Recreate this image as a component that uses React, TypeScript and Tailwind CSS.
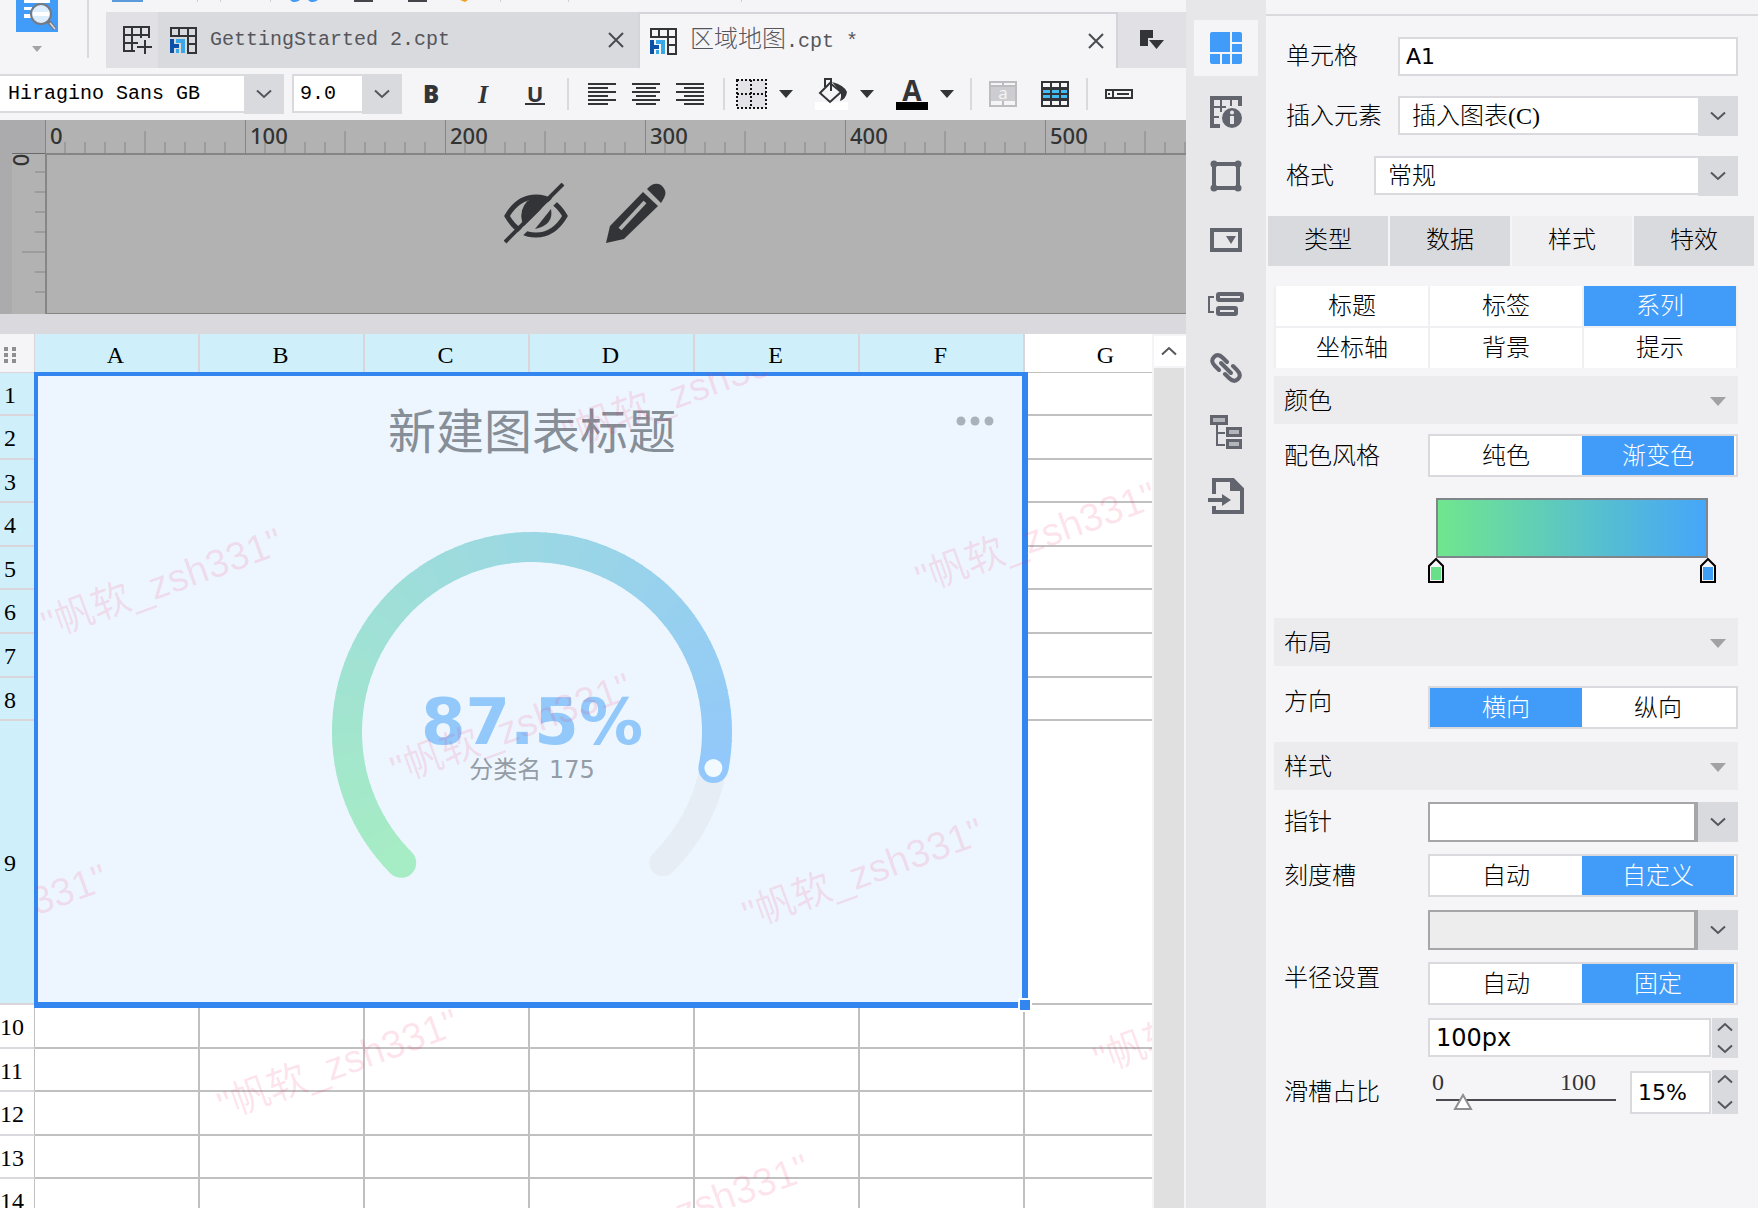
import React from "react";
import clsx from "clsx";

const SONG = "font-['Liberation_Serif','Noto_Sans_CJK_SC',serif]";
const MONO = "font-['Liberation_Mono','Noto_Sans_CJK_SC',monospace]";
const SANS = "font-['DejaVu_Sans','Noto_Sans_CJK_SC',sans-serif]";

/* ---------- small shared pieces ---------- */

const ChevronDown = () => (
  <svg width="16" height="10" viewBox="0 0 16 10" fill="none" stroke="#55565c" strokeWidth="2">
    <path d="M1 1.5l7 6.5 7-6.5" />
  </svg>
);

const ChevronUp = () => (
  <svg width="16" height="10" viewBox="0 0 16 10" fill="none" stroke="#55565c" strokeWidth="2">
    <path d="M1 8.5L8 2l7 6.5" />
  </svg>
);

const Caret = () => (
  <svg width="14" height="8" viewBox="0 0 14 8" fill="#333438">
    <path d="M0 0h14L7 8z" />
  </svg>
);

const Divider = () => <div className="w-[2px] h-8 bg-[#dadade] shrink-0" />;

const Select = ({ id, label, value, className, textClass }) => (
  <div className={clsx("relative flex h-10", className)}>
    <select
      id={id}
      aria-label={label}
      defaultValue={value}
      className={clsx(
        "appearance-none w-full h-[39px] bg-white border-2 border-[#dadade] text-black outline-none",
        textClass
      )}
    >
      <option>{value}</option>
    </select>
    <span className="absolute right-0 top-0 w-10 h-10 bg-[#d9dade] flex items-center justify-center pointer-events-none">
      <ChevronDown />
    </span>
  </div>
);

/* ---------- file tabs ---------- */

const FileIcon = () => (
  <svg width="27" height="27" viewBox="0 0 27 27" className="shrink-0">
    <g fill="none" stroke="#333438" strokeWidth="2">
      <path d="M1 10V1h25v25h-8V10" />
      <path d="M0 9h26M9 1v8M18 1v8M18 17h8" />
    </g>
    <path d="M0 12h4v5h5v4H4v5H0z" fill="#0b52a8" />
    <path d="M6 12h9v14h-4V16H6zM6 22h3v4H6z" fill="#3aa8e6" />
  </svg>
);

const CloseIcon = () => (
  <svg width="16" height="16" viewBox="0 0 16 16" stroke="#4a4b50" strokeWidth="2">
    <path d="M1 1l14 14M15 1L1 15" />
  </svg>
);

const TopBar = () => (
  <div className="flex h-[68px] shrink-0">
    <div className="flex w-[106px] shrink-0">
      <button aria-label="预览" className="flex flex-col items-center w-[74px] h-[68px]">
        <svg width="42" height="34" viewBox="0 0 42 34">
          <path d="M0 0h42v32H0z" fill="#409bf9" />
          <path d="M8 0h26v3H8zM8 7h8v3H8zM8 14h8v4H8z" fill="#fff" />
          <circle cx="25" cy="14" r="10" fill="#dcedfd" stroke="#777a80" strokeWidth="2" />
          <path d="M17 12h16v4H17z" fill="#fff" />
          <path d="M32 21l7 8" stroke="#77797e" strokeWidth="4" />
          <path d="M34 23l5 6" stroke="#d9dade" strokeWidth="1.5" />
        </svg>
        <svg width="10" height="6" viewBox="0 0 10 6" fill="#a4a4a8" className="mt-3">
          <path d="M0 0h10L5 6z" />
        </svg>
      </button>
      <div className="ml-[13px] w-[2px] h-[58px] bg-[#dadade]" />
    </div>

    <div className="flex-1 min-w-0">
      {/* bottom edge of the main toolbar icons */}
      <svg width="700" height="12" viewBox="0 0 700 12">
        <path d="M6 0h31v2H6z" fill="#5b9bdc" />
        <path d="M91 0h1v2h-1zM114 0h1v2h-1zM164 0h1v2h-1zM394 0h1v2h-1zM462 0h1v2h-1zM635 0h1v2h-1z" fill="#cfcfd4" />
        <path d="M184 0h10q-4 3-8 1.500zM202 0h10q-4 3-8 1.500z" fill="#409bf9" />
        <path d="M248 0h19v2h-19zM302 0h19v2h-19z" fill="#44454a" />
        <path d="M354 0h8l-3 2z" fill="#f0a21e" />
      </svg>
      <div className="flex h-14 bg-[#e0e0e5]">
        <button aria-label="新建" className="w-[52px] shrink-0 flex items-center justify-center pl-3">
          <svg width="30" height="28" viewBox="0 0 30 28" fill="none" stroke="#333438" strokeWidth="2">
            <path d="M12 25H1V1h25v11M1 9h25M1 17h14M9 1v24M18 1v11M22 14v14M14 21h15" />
          </svg>
        </button>
        <div className="flex-1 max-w-[480px] bg-[#d9dade] flex items-center pl-3 pr-[14px]">
          <FileIcon />
          <span className={clsx(MONO, "ml-[13px] flex-1 text-xl text-[#55565c]")}>GettingStarted 2.cpt</span>
          <button aria-label="关闭">
            <CloseIcon />
          </button>
        </div>
        <div className="flex-1 max-w-[480px] bg-[#f5f5f8] border-t-2 border-x-2 border-[#d4d4da] flex items-center pl-[10px] pr-3">
          <FileIcon />
          <span className={clsx(MONO, "ml-[13px] flex-1 flex items-baseline text-xl text-[#55565c]")}>
            <span className="text-2xl font-light">区域地图</span>
            <span className="whitespace-pre">.cpt *</span>
          </span>
          <button aria-label="关闭">
            <CloseIcon />
          </button>
        </div>
        <button aria-label="标签列表" className="w-[68px] shrink-0 flex items-center justify-center">
          <svg width="24" height="20" viewBox="0 0 24 20" fill="#333438">
            <path d="M0 0h13v8H8v8H0zM9 10h15l-7.500 9z" />
          </svg>
        </button>
      </div>
    </div>
  </div>
);

/* ---------- format toolbar ---------- */

const AlignIcon = ({ paths }) => (
  <svg width="28" height="22" viewBox="0 0 28 22" stroke="#333438" strokeWidth="2">
    <path d={paths} />
  </svg>
);

const FormatBar = () => (
  <div className="flex items-center h-[52px] shrink-0 overflow-hidden">
    <Select
      id="font"
      label="字体"
      value="Hiragino Sans GB"
      className="w-[284px] shrink-0"
      textClass={clsx(MONO, "pl-2 text-xl border-l-0")}
    />
    <Select
      id="size"
      label="字号"
      value="9.0"
      className="w-[110px] shrink-0 ml-2"
      textClass={clsx(MONO, "pl-[6px] text-xl")}
    />
    <div className="flex items-center ml-[19px] gap-8 w-[128px] shrink-0 text-[#333438] font-['Open_Sans',sans-serif]">
      <button className="w-5 text-2xl font-extrabold">B</button>
      <button className="w-5 text-[26px] font-bold italic font-['Liberation_Serif',serif]">I</button>
      <button className="w-5 text-[22px] font-bold leading-5 border-b-2 border-[#333438]">U</button>
    </div>
    <div className="ml-[18px]">
      <Divider />
    </div>
    <div className="flex items-center gap-4 ml-[19px]">
      <button aria-label="左对齐">
        <AlignIcon paths="M0 1h28M0 5h20M0 9h28M0 13h20M0 17h28M0 21h20" />
      </button>
      <button aria-label="居中">
        <AlignIcon paths="M0 1h28M4 5h20M0 9h28M4 13h20M0 17h28M4 21h20" />
      </button>
      <button aria-label="右对齐">
        <AlignIcon paths="M0 1h28M8 5h20M0 9h28M8 13h20M0 17h28M8 21h20" />
      </button>
    </div>
    <div className="ml-[19px]">
      <Divider />
    </div>
    <button aria-label="边框" className="flex items-center gap-3 ml-[11px]">
      <svg width="31" height="30" viewBox="0 0 31 30" fill="#e3e3e8" stroke="#111" strokeWidth="2" strokeDasharray="2 2">
        <path d="M1 1h29v28H1zM15 1v28M1 15h29" />
      </svg>
      <Caret />
    </button>
    <button aria-label="填充色" className="flex items-center gap-3 ml-[22px]">
      <svg width="33" height="32" viewBox="0 0 33 32">
        <path d="M0 24h33v8H0z" fill="#fff" />
        <path d="M10 9V1h6v12M15 5L5 15l10 9 11-10z" fill="none" stroke="#333438" strokeWidth="2" />
        <path d="M17 4q12 3 15 10-1 7-7 9 3-8-2-12z" fill="#333438" />
      </svg>
      <Caret />
    </button>
    <button aria-label="字体颜色" className="flex items-center gap-3 ml-[22px]">
      <span className="flex flex-col items-center w-8 h-8 bg-[linear-gradient(#000,#000)] bg-no-repeat bg-bottom bg-[length:32px_8px]">
        <span className="text-[28px] leading-6 font-bold text-[#333438] font-['Open_Sans',sans-serif]">A</span>
      </span>
      <Caret />
    </button>
    <div className="ml-4">
      <Divider />
    </div>
    <button aria-label="合并单元格" className="ml-[17px]">
      <svg width="28" height="26" viewBox="0 0 28 26">
        <path d="M0 0h28v26H0z" fill="#bdbdc1" />
        <path d="M2 2h11v2H2zM15 2h11v2H15zM2 20h11v4H2zM15 20h11v4H15z" fill="#f5f5f8" />
        <path d="M2 6h24v14H2z" fill="#cdcdd1" />
        <text x="14" y="18" textAnchor="middle" fontSize="17" fontFamily="Open Sans" fill="#f5f5f8">a</text>
      </svg>
    </button>
    <button aria-label="条件属性" className="ml-6">
      <svg width="28" height="26" viewBox="0 0 28 26" fill="none" stroke="#333438" strokeWidth="2">
        <path d="M1 8h26v10H1z" fill="#41bdf3" />
        <path d="M1 1h26v24H1zM1 7h26M1 13h26M1 19h26M10 1v24M19 1v24" />
      </svg>
    </button>
    <div className="ml-[17px]">
      <Divider />
    </div>
    <button aria-label="控件" className="ml-[17px]">
      <svg width="28" height="10" viewBox="0 0 28 10" fill="none" stroke="#333438" strokeWidth="2">
        <path d="M1 1h26v8H1zM8 1v8M12 5h12M4 4v2" />
      </svg>
    </button>
  </div>
);

/* ---------- ruler and report block ---------- */

const RulerSegment = ({ label }) => (
  <div className="relative w-[200px] h-[33px] shrink-0 border-l border-[#868686]">
    <svg width="199" height="33" viewBox="0 0 199 33" stroke="#9c9c9c" strokeWidth="2" className="absolute inset-0">
      {[1, 2, 3, 4, 5, 6, 7, 8, 9].map((i) => (
        <path key={i} d={i === 5 ? "M99 11v22" : `M${i * 20 - 1} 22v11`} />
      ))}
    </svg>
    <span className="relative block pl-1 text-[22px] leading-[30px] font-medium text-[#333] font-['Noto_Sans',sans-serif]">
      {label}
    </span>
  </div>
);

const ReportBlock = () => (
  <div className="shrink-0 bg-[#b2b2b2]">
    <div className="flex h-[33px] overflow-hidden">
      <div className="w-[45px] shrink-0 bg-[#ababad]" />
      {[0, 100, 200, 300, 400, 500].map((n) => (
        <RulerSegment key={n} label={n} />
      ))}
    </div>
    <div className="flex h-[161px]">
      <div className="w-3 shrink-0 bg-[#ababad]" />
      <div className="w-[33px] shrink-0 border-t border-[#6a6a6a] grid">
        <svg width="33" height="158" viewBox="0 0 33 158" stroke="#9c9c9c" strokeWidth="2" className="[grid-area:1/1]">
          <path d="M23 18h10M23 38h10M23 58h10M23 78h10M10 98h23M23 118h10M23 138h10" />
        </svg>
        <span className="[grid-area:1/1] flex items-center justify-center w-4 h-3 text-[22px] leading-3 font-medium text-[#333] -rotate-90 font-['Noto_Sans',sans-serif]">
          0
        </span>
      </div>
      <div className="flex-1 border-2 border-r-0 border-b border-[#868686] flex items-start pt-7 pl-[457px] gap-[38px]">
        <button aria-label="隐藏">
          <svg width="64" height="62" viewBox="0 0 64 62">
            <path d="M3 33Q14 14 32 14t29 19Q50 52 32 52T3 33z" fill="none" stroke="#333438" strokeWidth="5" />
            <path d="M32 14a17 19 0 0 0-9 33l20-30a16 16 0 0 0-11-3z" fill="#333438" />
            <path d="M47 26q3 16-16 20z" fill="#333438" />
            <path d="M5 62L64 4" stroke="#b2b2b2" strokeWidth="6" />
            <path d="M1 59L59 1" stroke="#333438" strokeWidth="4" />
          </svg>
        </button>
        <button aria-label="编辑">
          <svg width="60" height="62" viewBox="0 0 60 62" fill="#333438">
            <path d="M0 60l4-17L37 9l15 14-34 33z" />
            <path d="M41 6q7-8 14-4 7 6 3 13l-3 5z" />
            <path d="M14 46l25-27" stroke="#b2b2b2" strokeWidth="4" />
          </svg>
        </button>
      </div>
    </div>
  </div>
);

/* ---------- gauge chart ---------- */

const START = 135;
const SWEEP = 236.25;
const FROM = [166, 236, 196];
const TO = [146, 200, 251];

const point = (deg) => {
  const a = (deg * Math.PI) / 180;
  return `${(200 + 185 * Math.cos(a)).toFixed(2)} ${(200 + 185 * Math.sin(a)).toFixed(2)}`;
};

const mix = (t) => `rgb(${FROM.map((c, i) => Math.round(c + (TO[i] - c) * t)).join(",")})`;

const Gauge = () => {
  const steps = 80;
  const segments = Array.from({ length: steps }, (_, i) => {
    const a = START + (SWEEP * i) / steps;
    const b = START + (SWEEP * (i + 1)) / steps + (i < steps - 1 ? 0.5 : 0);
    return <path key={i} d={`M${point(a)}A185 185 0 0 1 ${point(b)}`} stroke={mix(i / steps)} />;
  });
  return (
    <svg width="400" height="346" viewBox="0 0 400 346" fill="none">
      <path d={`M${point(11)}A185 185 0 0 1 ${point(45)}`} stroke="#e6edf4" strokeWidth="27" strokeLinecap="round" />
      <circle cx="69.200" cy="330.800" r="15" fill={mix(0)} />
      <g strokeWidth="30">{segments}</g>
      <circle cx="381.400" cy="236.100" r="15" fill={mix(1)} />
      <circle cx="381.400" cy="236.100" r="9" fill="#f2f9ff" />
    </svg>
  );
};

const Chart = () => (
  <div className="relative flex flex-col items-center h-[626px] pl-1 bg-[#edf6fe]">
    <h2 className="mt-[22px] text-5xl leading-[60px] text-[#868e97] font-['Noto_Sans_CJK_SC',sans-serif]">新建图表标题</h2>
    <button aria-label="更多" className="absolute right-7 top-10">
      <svg width="38" height="10" viewBox="0 0 38 10" fill="#a9b1b9">
        <circle cx="5" cy="5" r="4.500" />
        <circle cx="19" cy="5" r="4.500" />
        <circle cx="33" cy="5" r="4.500" />
      </svg>
    </button>
    <div className="grid justify-items-center mt-[74px]">
      <div className="[grid-area:1/1]">
        <Gauge />
      </div>
      <div className={clsx(SANS, "[grid-area:1/1] pt-[158px] text-center")}>
        <div className="text-[64px] leading-[64px] font-bold text-[#92c8fa]">87.5%</div>
        <div className="text-2xl leading-8 text-[#949ca5]">分类名 175</div>
      </div>
    </div>
  </div>
);

/* ---------- spreadsheet ---------- */

const COLUMNS = ["A", "B", "C", "D", "E", "F", "G"];
const ROWS = [43, 44, 43, 44, 43, 44, 44, 43, 284, 44, 43, 44, 43, 44];

const WATERMARKS = [
  [648, 19],
  [1001, 164],
  [127, 210],
  [476, 355],
  [828, 500],
  [-48, 546],
  [303, 691],
  [1179, 645],
  [654, 836],
];

const Sheet = () => (
  <div className="relative flex-1 overflow-hidden bg-white">
    <table className={clsx(SONG, "table-fixed w-[1190px] border-separate border-spacing-0 text-2xl text-black")}>
      <colgroup>
        <col className="w-[35px]" />
        {COLUMNS.map((c) => (
          <col key={c} className="w-[165px]" />
        ))}
      </colgroup>
      <thead>
        <tr className="h-[39px]">
          <th className="p-0 pl-1 pt-1 bg-[#f5f5f8] border-r border-b border-[#d9d5da]">
            <svg width="13" height="16" viewBox="0 0 13 16" fill="#8e8e93">
              <path d="M0 0h4v4H0zM8 0h4v4H8zM0 6h4v4H0zM8 6h4v4H8zM0 12h4v4H0zM8 12h4v4H8z" />
            </svg>
          </th>
          {COLUMNS.map((c) => (
            <th
              key={c}
              className={clsx(
                "p-0 pt-1 pr-[2px] font-normal leading-8 border-r-2 border-b",
                c === "G" ? "bg-white border-[#c0c0c0]" : "bg-[#cfeffa] border-[#d9d5da]"
              )}
            >
              {c}
            </th>
          ))}
        </tr>
      </thead>
      <tbody>
        {ROWS.map((h, i) => (
          <tr key={i} style={{ height: h }}>
            <th
              className={clsx(
                "p-0 pt-[2px] pr-[14px] font-normal leading-8 border-b-2 border-r",
                i < 9 ? "bg-[#cfeffa] border-b-[#d9d5da] border-r-[#c0c0c0]" : "bg-white border-b-[#dadade] border-r-[#c0c0c0]"
              )}
            >
              {i + 1}
            </th>
            {i === 0 && (
              <td rowSpan={9} colSpan={6} className="relative p-0">
                <div className="absolute -left-px -top-px -right-[3px] -bottom-[3px] z-10 border-4 border-r-[6px] border-b-[6px] border-[#3385f0] bg-[#edf6fe]">
                  <Chart />
                  {/* drag handle */}
                  <span className="absolute -right-[10px] -bottom-[10px] w-[14px] h-[14px] box-border border-2 border-white bg-[#3385f0]" />
                </div>
              </td>
            )}
            {(i < 9 ? ["G"] : COLUMNS).map((c) => (
              <td key={c} className="p-0 border-r-2 border-b-2 border-[#c0c0c0]" />
            ))}
          </tr>
        ))}
      </tbody>
    </table>

    {/* user watermark, repeated over the cells */}
    <div className="absolute left-[35px] top-[39px] right-0 bottom-0 z-20 overflow-hidden pointer-events-none">
      {WATERMARKS.map(([x, y], i) => (
        <span
          key={i}
          style={{ left: x, top: y }}
          className="absolute -translate-x-1/2 -translate-y-1/2 -rotate-20 whitespace-nowrap text-[39px] leading-none text-[#f5286e]/13 font-['Liberation_Sans','Noto_Sans_CJK_SC',sans-serif]"
        >
          "帆软_zsh331"
        </span>
      ))}
    </div>
  </div>
);

/* ---------- side icon rail ---------- */

const RAIL = [
  {
    name: "单元格元素",
    icon: (
      <svg width="32" height="32" viewBox="0 0 32 32" fill="#409bf9">
        <path d="M2 0h18v20H0V2q0-2 2-2zM22 0h8q2 0 2 2v8H22zM22 12h10v8H22zM0 22h10v10H2q-2 0-2-2zM12 22h8v10h-8zM22 22h10v8q0 2-2 2h-8z" />
      </svg>
    ),
  },
  {
    name: "单元格属性",
    icon: (
      <svg width="32" height="32" viewBox="0 0 32 32" fill="none" stroke="#62656e">
        <path d="M10 30H2V2h28v8" strokeWidth="4" />
        <path d="M11 4v12M21 4v6M4 11h12M4 21h5" strokeWidth="2" />
        <circle cx="22" cy="22" r="10" fill="#62656e" stroke="none" />
        <circle cx="22" cy="16.500" r="2" fill="#e7e7ea" stroke="none" />
        <path d="M22 20v8" stroke="#e7e7ea" strokeWidth="4" />
      </svg>
    ),
  },
  {
    name: "悬浮元素",
    icon: (
      <svg width="32" height="32" viewBox="0 0 32 32" fill="#62656e">
        <path d="M4 4h24v24H4z" fill="none" stroke="#62656e" strokeWidth="4" />
        <circle cx="4" cy="4" r="3.500" />
        <circle cx="28" cy="4" r="3.500" />
        <circle cx="4" cy="28" r="3.500" />
        <circle cx="28" cy="28" r="3.500" />
      </svg>
    ),
  },
  {
    name: "控件设置",
    icon: (
      <svg width="32" height="24" viewBox="0 0 32 24">
        <rect x="2" y="2" width="28" height="20" fill="none" stroke="#62656e" strokeWidth="4" />
        <path d="M16 8h10l-5 8z" fill="#62656e" />
      </svg>
    ),
  },
  {
    name: "条件属性",
    icon: (
      <svg width="36" height="24" viewBox="0 0 36 24" fill="none" stroke="#62656e">
        <path d="M6 5H1v15h5" strokeWidth="2" />
        <rect x="10" y="2" width="24" height="6" strokeWidth="4" rx="1" />
        <rect x="10" y="16" width="18" height="6" strokeWidth="4" rx="1" />
      </svg>
    ),
  },
  {
    name: "超级链接",
    icon: (
      <svg width="32" height="32" viewBox="0 0 32 32" fill="none" stroke="#62656e" strokeWidth="4" strokeLinecap="round">
        <path d="M9 18l-4-4q-5-5-1-9t9 1l4 4" />
        <path d="M23 14l4 4q5 5 1 9t-9-1l-4-4" />
        <path d="M11 11l10 10" />
      </svg>
    ),
  },
  {
    name: "组织",
    icon: (
      <svg width="32" height="34" viewBox="0 0 32 34" fill="none" stroke="#62656e">
        <path d="M7 8v22h8M7 18h8" strokeWidth="2" />
        <rect x="1.500" y="1.500" width="15" height="7" strokeWidth="3" fill="#b4b5ba" />
        <rect x="17.500" y="13.500" width="13" height="7" strokeWidth="3" fill="#b4b5ba" />
        <rect x="17.500" y="25.500" width="13" height="7" strokeWidth="3" fill="#b4b5ba" />
      </svg>
    ),
  },
  {
    name: "导出",
    icon: (
      <svg width="36" height="36" viewBox="0 0 36 36" fill="none" stroke="#62656e" strokeWidth="4">
        <path d="M6 16V2h19l9 9v23H6v-6" />
        <path d="M22 2v11h12L25 2z" fill="#62656e" stroke="none" />
        <path d="M0 22h16" />
        <path d="M14 16l9 6-9 6z" fill="#62656e" stroke="none" />
      </svg>
    ),
  },
];

const IconRail = () => (
  <nav className="w-20 shrink-0 bg-[#e7e7ea] pt-5 flex flex-col items-center gap-2">
    {RAIL.map((item, i) => (
      <button
        key={item.name}
        aria-label={item.name}
        className={clsx("w-16 h-14 flex items-center justify-center", i === 0 && "bg-[#f5f5f8]")}
      >
        {item.icon}
      </button>
    ))}
  </nav>
);

/* ---------- property panel ---------- */

const SectionHeader = ({ children, className }) => (
  <button
    className={clsx("w-full h-12 bg-[#ececef] flex items-center justify-between pl-[10px] pr-3 pt-[2px]", className)}
  >
    <span>{children}</span>
    <svg width="16" height="9" viewBox="0 0 16 9" fill="#a2a2a5">
      <path d="M0 0h16L8 9z" />
    </svg>
  </button>
);

const Row = ({ label, children, className }) => (
  <div className={clsx("flex", className)}>
    <span className="w-[154px] shrink-0 pl-[10px]">{label}</span>
    {children}
  </div>
);

const Toggle = ({ label, options, active }) => (
  <div role="group" aria-label={label} className="flex-1 h-[43px] grid grid-cols-2 bg-white border-2 border-[#dadade] pr-[2px]">
    {options.map((o) => (
      <button key={o} aria-pressed={o === active} className={clsx(o === active && "bg-[#409bf9] text-white")}>
        {o}
      </button>
    ))}
  </div>
);

const ColorPicker = ({ label, className }) => (
  <button aria-label={label} className="flex flex-1 h-10">
    <span className={clsx("flex-1 h-10 border-2 border-r-4 border-[#a6a6a8]", className)} />
    <span className="w-10 h-10 bg-[#d9dade] flex items-center justify-center">
      <ChevronDown />
    </span>
  </button>
);

const Spinner = ({ className }) => (
  <div className={clsx("w-[26px] ml-px shrink-0 bg-[#d9dade] flex flex-col items-center justify-between py-1", className)}>
    <button aria-label="增加">
      <ChevronUp />
    </button>
    <button aria-label="减少">
      <ChevronDown />
    </button>
  </div>
);

const StopHandle = ({ color }) => (
  <svg width="16" height="25" viewBox="0 0 16 25">
    <path d="M1 24V8l7-7 7 7v16z" fill="#f5f5f8" stroke="#000" strokeWidth="2" />
    <path d="M3 9h10v13H3z" fill={color} />
  </svg>
);

const PropertyPanel = () => (
  <aside className={clsx(SONG, "w-[492px] shrink-0 text-2xl leading-8 text-black font-light")}>
    <div className="h-4 border-b-2 border-[#d9d9de]" />
    <div className="pl-5 pr-5 pt-5 flex flex-col gap-5">
      <div className="flex items-center h-10">
        <label htmlFor="cell" className="w-28">单元格</label>
        <input
          id="cell"
          defaultValue="A1"
          className={clsx(SANS, "flex-1 min-w-0 h-[39px] bg-white border-2 border-[#dadade] pl-[6px] text-[22px] font-normal outline-none")}
        />
      </div>
      <div className="flex items-center h-10">
        <label htmlFor="element" className="w-28">插入元素</label>
        <Select id="element" label="插入元素" value="插入图表(C)" className="flex-1" textClass="pl-3" />
      </div>
      <div className="flex items-center h-10">
        <label htmlFor="format" className="w-[88px]">格式</label>
        <Select id="format" label="格式" value="常规" className="flex-1" textClass="pl-3" />
      </div>
    </div>

    <div role="tablist" className="grid grid-cols-4 gap-[2px] mt-5 pl-[2px] pr-1">
      {["类型", "数据", "样式", "特效"].map((t) => (
        <button
          key={t}
          role="tab"
          aria-selected={t === "样式"}
          className={clsx("h-[50px] pb-[2px]", t === "样式" ? "bg-[#efeff2]" : "bg-[#d9dade]")}
        >
          {t}
        </button>
      ))}
    </div>

    <div className="pl-2 pr-5 pt-5">
      <div className="grid grid-cols-3 gap-[2px] px-[2px] bg-[#f0f0f3]">
        {["标题", "标签", "系列", "坐标轴", "背景", "提示"].map((t) => (
          <button key={t} className={clsx("h-10", t === "系列" ? "bg-[#409bf9] text-white" : "bg-white")}>
            {t}
          </button>
        ))}
      </div>

      <SectionHeader className="mt-2">颜色</SectionHeader>
      <Row label="配色风格" className="mt-[10px] items-center">
        <Toggle label="配色风格" options={["纯色", "渐变色"]} active="渐变色" />
      </Row>
      <div className="pl-[162px] pr-[30px] mt-[21px]">
        <div className="h-[60px] border-2 border-[#808589] bg-[linear-gradient(to_right,#70e68e,#46a6fa)]" />
        <div className="flex justify-between -mx-2">
          <StopHandle color="#68e08a" />
          <StopHandle color="#3f9ff5" />
        </div>
      </div>

      <SectionHeader className="mt-[35px]">布局</SectionHeader>
      <Row label="方向" className="mt-5 items-start">
        <Toggle label="方向" options={["横向", "纵向"]} active="横向" />
      </Row>

      <SectionHeader className="mt-[13px]">样式</SectionHeader>
      <Row label="指针" className="mt-3 items-center">
        <ColorPicker label="指针" className="bg-white" />
      </Row>
      <Row label="刻度槽" className="mt-3 items-center">
        <Toggle label="刻度槽" options={["自动", "自定义"]} active="自定义" />
      </Row>
      <Row label="" className="mt-[13px]">
        <ColorPicker label="刻度槽颜色" className="bg-[#ededed]" />
      </Row>
      <Row label="半径设置" className="mt-3 items-start">
        <Toggle label="半径设置" options={["自动", "固定"]} active="固定" />
      </Row>
      <Row label="" className="mt-[13px]">
        <input
          aria-label="半径"
          defaultValue="100px"
          className={clsx(SANS, "flex-1 min-w-0 h-[39px] bg-white border-2 border-[#dadade] pl-[6px] font-normal outline-none")}
        />
        <Spinner className="h-10" />
      </Row>
      <Row label="滑槽占比" className="mt-3 items-center">
        <div className="relative w-[180px] mx-2 h-11 shrink-0 text-[#333438] font-normal">
          <div className="flex justify-between pr-5 -ml-1 leading-6">
            <span>0</span>
            <span>100</span>
          </div>
          <div className="h-[2px] mt-[5px] bg-[#4a4b50]" />
          <svg width="20" height="17" viewBox="0 0 20 17" className="absolute left-[17px] top-[23px]">
            <path d="M2 16L10 2l8 14z" fill="#fff" stroke="#8e8e92" strokeWidth="2" />
          </svg>
          <input type="range" aria-label="滑槽占比" defaultValue={15} className="absolute inset-x-0 bottom-0 w-full h-5 opacity-0" />
        </div>
        <input
          aria-label="滑槽占比数值"
          defaultValue="15%"
          className={clsx(SANS, "ml-[6px] flex-1 min-w-0 h-[43px] bg-white border-2 border-[#dadade] pl-[6px] text-[22px] font-normal outline-none")}
        />
        <Spinner className="h-11" />
      </Row>
    </div>
  </aside>
);

export default function App() {
  return (
    <div className="flex h-screen overflow-hidden bg-[#f5f5f8]">
      <main className="flex-1 min-w-0 flex flex-col">
        <TopBar />
        <FormatBar />
        <ReportBlock />
        <div className="h-5 shrink-0 bg-[#dadade]" />
        <div className="flex flex-1 min-h-0">
          <Sheet />
          {/* vertical scrollbar */}
          <div className="w-[34px] shrink-0 pt-[2px] pl-[2px] flex flex-col">
            <button aria-label="向上滚动" className="h-[30px] pr-[2px] bg-white flex items-center justify-center">
              <ChevronUp />
            </button>
            <div className="flex-1 mt-[2px] mr-[2px] bg-[#e0e0e0]" />
          </div>
        </div>
      </main>
      <IconRail />
      <PropertyPanel />
    </div>
  );
}
